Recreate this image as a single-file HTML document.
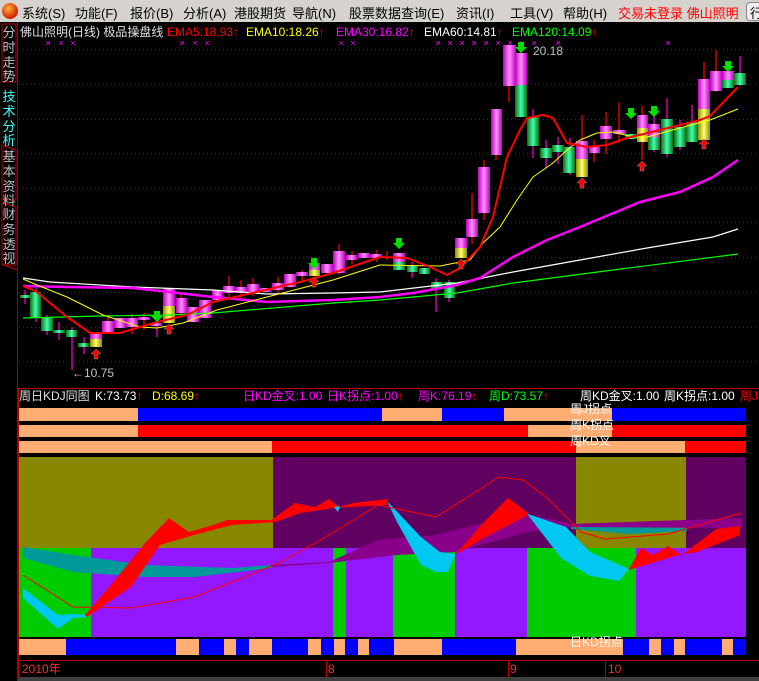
<!DOCTYPE html>
<html><head><meta charset="utf-8"><style>
*{margin:0;padding:0}
body{width:759px;height:681px;overflow:hidden;background:#000;font-family:"Liberation Sans","Noto Sans CJK SC",sans-serif;position:relative}
#menu{position:absolute;left:0;top:0;width:759px;height:22px;background:#d6d3ce;font-size:13px;color:#000}
#menu span{position:absolute;top:3px;white-space:nowrap}
svg{position:absolute;left:0;top:0}
</style></head><body>
<div id="menu">
<div style="position:absolute;left:2px;top:3px;width:16px;height:16px;border-radius:50%;background:radial-gradient(circle at 40% 35%,#ffb040,#d02000 70%);"></div>
<span style="left:22px">系统(S)</span><span style="left:75px">功能(F)</span><span style="left:130px">报价(B)</span><span style="left:183px">分析(A)</span><span style="left:234px">港股期货</span><span style="left:292px">导航(N)</span><span style="left:349px">股票数据查询(E)</span><span style="left:456px">资讯(I)</span><span style="left:510px">工具(V)</span><span style="left:563px">帮助(H)</span>
<span style="left:618px;color:#f00">交易未登录 佛山照明</span>
<div style="position:absolute;left:746px;top:2px;width:20px;height:17px;border:1px solid #888;border-radius:4px;background:#eee;font-size:13px;padding-left:3px">行</div>
</div>
<svg width="759" height="681" viewBox="0 0 759 681" style="top:0" font-family="Liberation Sans, Noto Sans CJK SC, sans-serif">
<defs>
<linearGradient id="m" x1="0" x2="1"><stop offset="0" stop-color="#c000c0"/><stop offset=".5" stop-color="#ff90ff"/><stop offset="1" stop-color="#c000c0"/></linearGradient>
<linearGradient id="g" x1="0" x2="1"><stop offset="0" stop-color="#107010"/><stop offset=".5" stop-color="#40ffb0"/><stop offset="1" stop-color="#107010"/></linearGradient>
<linearGradient id="o" x1="0" x2="1"><stop offset="0" stop-color="#909000"/><stop offset=".5" stop-color="#ffff70"/><stop offset="1" stop-color="#909000"/></linearGradient>
</defs>
<!-- sidebar -->
<rect x="0" y="22" width="17" height="659" fill="#000"/>
<line x1="17.5" y1="22" x2="17.5" y2="681" stroke="#a00000"/>
<g fill="none" stroke="#c00000"><path d="M2 24H16V82H2Z"/><path d="M2 145L16 150V200H2Z"/><path d="M2 203L16 207V265H2Z"/><path d="M2 264L17 270"/></g>
<g font-size="13" fill="#c0c0c0" text-anchor="middle">
<text x="9" y="37">分</text><text x="9" y="52">时</text><text x="9" y="67">走</text><text x="9" y="81">势</text>
<text x="9" y="101" fill="#40ffff">技</text><text x="9" y="116" fill="#40ffff">术</text><text x="9" y="131" fill="#40ffff">分</text><text x="9" y="145" fill="#40ffff">析</text>
<text x="9" y="161">基</text><text x="9" y="176">本</text><text x="9" y="191">资</text><text x="9" y="205">料</text>
<text x="9" y="219">财</text><text x="9" y="234">务</text><text x="9" y="249">透</text><text x="9" y="263">视</text>
</g>
<!-- grid -->
<g stroke="#a00000" stroke-dasharray="1 3">
<line x1="19" y1="49.5" x2="759" y2="49.5"/><line x1="19" y1="84.5" x2="759" y2="84.5"/><line x1="19" y1="119.5" x2="759" y2="119.5"/><line x1="19" y1="153.5" x2="759" y2="153.5"/><line x1="19" y1="188.5" x2="759" y2="188.5"/><line x1="19" y1="222.5" x2="759" y2="222.5"/><line x1="19" y1="257.5" x2="759" y2="257.5"/><line x1="19" y1="292.5" x2="759" y2="292.5"/><line x1="19" y1="327.5" x2="759" y2="327.5"/><line x1="19" y1="361.5" x2="759" y2="361.5"/>
</g>
<!-- title -->
<g font-size="12">
<text x="20" y="36" fill="#e0e0e0">佛山照明(日线) 极品操盘线</text>
<text x="167" y="36" fill="#f00">EMA5:18.93↑</text>
<text x="246" y="36" fill="#ff0">EMA10:18.26<tspan fill="#f00">↑</tspan></text>
<text x="336" y="36" fill="#f0f">EMA30:16.82<tspan fill="#f00">↑</tspan></text>
<text x="424" y="36" fill="#fff">EMA60:14.81<tspan fill="#f00">↑</tspan></text>
<text x="512" y="36" fill="#0f0">EMA120:14.09<tspan fill="#f00">↑</tspan></text>
</g>
<g fill="#f0f" font-size="9" text-anchor="middle">
<text x="48" y="46">×</text><text x="61" y="46">×</text><text x="73" y="46">×</text><text x="182" y="46">×</text><text x="195" y="46">×</text><text x="207" y="46">×</text><text x="341" y="46">×</text><text x="353" y="46">×</text>
<text x="438" y="46">×</text><text x="450" y="46">×</text><text x="462" y="46">×</text><text x="474" y="46">×</text><text x="486" y="46">×</text><text x="498" y="46">×</text><text x="510" y="46">×</text><text x="522" y="46">×</text><text x="534" y="46">×</text><text x="558" y="46">×</text><text x="668" y="46">×</text>
</g>
<text x="533" y="55" fill="#c0c0c0" font-size="12">20.18</text>
<text x="72" y="377" fill="#c0c0c0" font-size="12">←10.75</text>
<!-- wicks -->
<g stroke-width="2">
<line x1="25" y1="290" x2="25" y2="304" stroke="#9b007d"/><line x1="36" y1="288" x2="36" y2="322" stroke="#9b007d"/><line x1="47" y1="315" x2="47" y2="335" stroke="#9b007d"/><line x1="59" y1="322" x2="59" y2="340" stroke="#9b007d"/><line x1="72" y1="327" x2="72" y2="370" stroke="#9b007d"/><line x1="84" y1="337" x2="84" y2="354" stroke="#9b007d"/>
<line x1="108" y1="316" x2="108" y2="334" stroke="#a00000"/><line x1="132" y1="314" x2="132" y2="334" stroke="#a00000"/><line x1="144" y1="313" x2="144" y2="330" stroke="#a00000"/><line x1="157" y1="318" x2="157" y2="337" stroke="#9b007d"/><line x1="181" y1="293" x2="181" y2="316" stroke="#a00000"/><line x1="229" y1="276" x2="229" y2="298" stroke="#a00000"/><line x1="241" y1="280" x2="241" y2="298" stroke="#a00000"/><line x1="253" y1="278" x2="253" y2="296" stroke="#a00000"/><line x1="278" y1="277" x2="278" y2="294" stroke="#a00000"/><line x1="302" y1="270" x2="302" y2="280" stroke="#a00000"/><line x1="339" y1="244" x2="339" y2="275" stroke="#a00000"/><line x1="352" y1="251" x2="352" y2="264" stroke="#a00000"/><line x1="377" y1="250" x2="377" y2="262" stroke="#a00000"/>
<line x1="387" y1="251" x2="387" y2="260" stroke="#a00000"/><line x1="412" y1="262" x2="412" y2="278" stroke="#9b007d"/><line x1="436" y1="278" x2="436" y2="312" stroke="#9b007d"/><line x1="449" y1="280" x2="449" y2="302" stroke="#9b007d"/><line x1="472" y1="193" x2="472" y2="244" stroke="#a00000"/><line x1="484" y1="160" x2="484" y2="220" stroke="#a00000"/><line x1="496" y1="109" x2="496" y2="160" stroke="#a00000"/><line x1="509" y1="45" x2="509" y2="102" stroke="#a00000"/><line x1="533" y1="109" x2="533" y2="158" stroke="#9b007d"/><line x1="546" y1="140" x2="546" y2="168" stroke="#9b007d"/><line x1="558" y1="137" x2="558" y2="164" stroke="#9b007d"/><line x1="570" y1="138" x2="570" y2="175" stroke="#9b007d"/><line x1="582" y1="115" x2="582" y2="177" stroke="#a00000"/><line x1="594" y1="140" x2="594" y2="162" stroke="#a00000"/><line x1="606" y1="112" x2="606" y2="154" stroke="#a00000"/><line x1="619" y1="102" x2="619" y2="143" stroke="#a00000"/><line x1="642" y1="106" x2="642" y2="160" stroke="#a00000"/><line x1="654" y1="110" x2="654" y2="152" stroke="#9b007d"/><line x1="667" y1="98" x2="667" y2="157" stroke="#9b007d"/><line x1="680" y1="120" x2="680" y2="150" stroke="#9b007d"/><line x1="692" y1="105" x2="692" y2="142" stroke="#9b007d"/><line x1="704" y1="62" x2="704" y2="110" stroke="#a00000"/><line x1="716" y1="50" x2="716" y2="92" stroke="#a00000"/><line x1="740" y1="56" x2="740" y2="86" stroke="#9b007d"/>
</g>
<!-- candles -->
<g>
<rect x="20" y="295" width="11" height="3" fill="url(#g)"/>
<rect x="30" y="292" width="11" height="26" fill="url(#g)"/>
<rect x="41" y="318" width="12" height="13" fill="url(#g)"/>
<rect x="53" y="330" width="12" height="3" fill="url(#g)"/>
<rect x="66" y="330" width="11" height="7" fill="url(#g)"/>
<rect x="78" y="343" width="11" height="4" fill="url(#g)"/>
<rect x="90" y="334" width="12" height="5" fill="url(#m)"/><rect x="90" y="339" width="12" height="8" fill="url(#o)"/>
<rect x="102" y="321" width="12" height="11" fill="url(#m)"/>
<rect x="114" y="318" width="12" height="10" fill="url(#m)"/>
<rect x="126" y="318" width="12" height="9" fill="url(#m)"/>
<rect x="138" y="317" width="12" height="3" fill="url(#m)"/>
<rect x="150" y="323" width="12" height="3" fill="url(#m)"/>
<rect x="163" y="288" width="12" height="18" fill="url(#m)"/><rect x="163" y="306" width="12" height="17" fill="url(#o)"/>
<rect x="176" y="298" width="11" height="15" fill="url(#m)"/>
<rect x="187" y="307" width="12" height="15" fill="url(#m)"/>
<rect x="199" y="300" width="12" height="18" fill="url(#m)"/>
<rect x="212" y="290" width="11" height="10" fill="url(#m)"/>
<rect x="223" y="286" width="12" height="7" fill="url(#m)"/>
<rect x="235" y="287" width="12" height="6" fill="url(#m)"/>
<rect x="247" y="284" width="12" height="8" fill="url(#m)"/>
<rect x="259" y="288" width="12" height="4" fill="url(#m)"/>
<rect x="272" y="283" width="12" height="7" fill="url(#m)"/>
<rect x="284" y="274" width="12" height="13" fill="url(#m)"/>
<rect x="296" y="272" width="12" height="4" fill="url(#m)"/>
<rect x="309" y="264" width="11" height="6" fill="url(#m)"/><rect x="309" y="270" width="11" height="6" fill="url(#o)"/>
<rect x="321" y="264" width="12" height="9" fill="url(#m)"/>
<rect x="333" y="251" width="12" height="22" fill="url(#m)"/>
<rect x="346" y="255" width="11" height="5" fill="url(#m)"/>
<rect x="358" y="253" width="12" height="5" fill="url(#m)"/>
<rect x="370" y="254" width="12" height="4" fill="url(#m)"/>
<rect x="393" y="253" width="12" height="9" fill="url(#m)"/><rect x="393" y="262" width="12" height="8" fill="url(#g)"/>
<rect x="407" y="266" width="11" height="6" fill="url(#g)"/>
<rect x="419" y="268" width="11" height="6" fill="url(#g)"/>
<rect x="431" y="282" width="12" height="7" fill="url(#g)"/>
<rect x="444" y="282" width="11" height="16" fill="url(#g)"/>
<rect x="455" y="238" width="12" height="10" fill="url(#m)"/><rect x="455" y="248" width="12" height="10" fill="url(#o)"/>
<rect x="466" y="219" width="12" height="18" fill="url(#m)"/>
<rect x="478" y="167" width="12" height="46" fill="url(#m)"/>
<rect x="491" y="109" width="11" height="46" fill="url(#m)"/>
<rect x="503" y="45" width="13" height="41" fill="url(#m)"/>
<rect x="515" y="53" width="12" height="32" fill="url(#m)"/><rect x="515" y="85" width="12" height="32" fill="url(#g)"/>
<rect x="527" y="117" width="12" height="29" fill="url(#g)"/>
<rect x="540" y="148" width="12" height="10" fill="url(#g)"/>
<rect x="552" y="145" width="12" height="7" fill="url(#g)"/>
<rect x="563" y="147" width="12" height="26" fill="url(#g)"/>
<rect x="576" y="141" width="12" height="18" fill="url(#m)"/><rect x="576" y="159" width="12" height="18" fill="url(#o)"/>
<rect x="589" y="147" width="11" height="6" fill="url(#m)"/>
<rect x="600" y="126" width="12" height="13" fill="url(#m)"/>
<rect x="613" y="130" width="13" height="4" fill="url(#m)"/>
<rect x="625" y="134" width="12" height="5" fill="url(#g)"/>
<rect x="637" y="115" width="11" height="13" fill="url(#m)"/><rect x="637" y="128" width="11" height="14" fill="url(#o)"/>
<rect x="648" y="124" width="12" height="13" fill="url(#m)"/><rect x="648" y="137" width="12" height="13" fill="url(#g)"/>
<rect x="661" y="119" width="12" height="35" fill="url(#g)"/>
<rect x="674" y="127" width="12" height="20" fill="url(#g)"/>
<rect x="686" y="122" width="12" height="20" fill="url(#g)"/>
<rect x="698" y="79" width="12" height="30" fill="url(#m)"/><rect x="698" y="109" width="12" height="31" fill="url(#o)"/>
<rect x="710" y="71" width="12" height="20" fill="url(#m)"/>
<rect x="722" y="71" width="12" height="9" fill="url(#m)"/><rect x="722" y="80" width="12" height="8" fill="url(#g)"/>
<rect x="734" y="73" width="12" height="12" fill="url(#g)"/>
</g>
<!-- MA lines -->
<g fill="none" stroke-linejoin="round">
<polyline stroke="#0f0" stroke-width="1.2" points="23,318 100,316 167,315 213,313 333,303 380,300 457,293 513,283 613,270 738,254"/>
<polyline stroke="#fff" stroke-width="1.2" points="23,278 50,282 133,287 213,290 267,294 333,293 380,292 457,283 513,272 580,260 647,248 713,237 738,229"/>
<polyline stroke="#f0f" stroke-width="2.5" points="23,286 67,287 133,288 160,291 213,297 267,302 333,300 380,297 413,293 457,285 480,278 513,257 547,240 580,227 640,202 680,192 713,177 738,160"/>
<polyline stroke="#ff0" stroke-width="1" points="23,279 37,285 67,297 103,315 140,327 157,328 183,323 217,310 267,297 333,280 380,265 440,266 470,260 483,243 500,227 517,200 533,177 553,163 567,150 580,140 597,133 613,132 633,137 647,137 680,128 710,120 738,109"/>
<polyline stroke="#f00" stroke-width="2" points="23,286 37,292 50,303 67,317 83,328 90,333 120,333 140,327 157,322 187,315 213,302 300,282 333,273 380,257 407,258 430,267 447,275 460,268 480,247 493,217 507,157 520,130 527,118 543,115 553,118 567,143 587,147 607,145 627,138 660,130 700,120 710,116 738,87"/>
</g>
<!-- arrows -->
<g fill="#00e000"><path d="M154 311h6v5h3l-6 6-6-6h3z"/><path d="M311 258h6v5h3l-6 6-6-6h3z"/><path d="M396 238h6v5h3l-6 6-6-6h3z"/><path d="M518 42h6v5h3l-6 6-6-6h3z"/><path d="M628 108h6v5h3l-6 6-6-6h3z"/><path d="M651 106h6v5h3l-6 6-6-6h3z"/><path d="M725 61h6v5h3l-6 6-6-6h3z"/></g>
<g fill="#f00" stroke="#888" stroke-width=".5"><path d="M96 349l-5 5h3v5h4v-5h3z"/><path d="M169 324l-5 5h3v5h4v-5h3z"/><path d="M314 277l-5 5h3v5h4v-5h3z"/><path d="M461 259l-5 5h3v5h4v-5h3z"/><path d="M582 178l-5 5h3v5h4v-5h3z"/><path d="M642 161l-5 5h3v5h4v-5h3z"/><path d="M704 139l-5 5h3v5h4v-5h3z"/></g>
<!-- separator -->
<line x1="18" y1="388.5" x2="759" y2="388.5" stroke="#c00000"/>
<g font-size="12">
<text x="19" y="400" fill="#e0e0e0">周日KDJ同图</text>
<text x="95" y="400" fill="#fff">K:73.73<tspan fill="#f00">↑</tspan></text>
<text x="152" y="400" fill="#ff0">D:68.69<tspan fill="#f00">↑</tspan></text>
<text x="243" y="400" fill="#f0f">日KD金叉:1.00</text>
<text x="327" y="400" fill="#f0f">日K拐点:1.00<tspan fill="#f00">↑</tspan></text>
<text x="418" y="400" fill="#f0f">周K:76.19<tspan fill="#f00">↑</tspan></text>
<text x="489" y="400" fill="#0f0">周D:73.57<tspan fill="#f00">↑</tspan></text>
<text x="580" y="400" fill="#fff">周KD金叉:1.00</text>
<text x="664" y="400" fill="#fff">周K拐点:1.00</text>
<text x="740" y="400" fill="#f00">周J</text>
</g>
<!-- bars -->
<g>
<rect x="18" y="408" width="120" height="13" fill="#ffad72"/><rect x="138" y="408" width="244" height="13" fill="#0000ff"/><rect x="382" y="408" width="60" height="13" fill="#ffad72"/><rect x="442" y="408" width="62" height="13" fill="#0000ff"/><rect x="504" y="408" width="108" height="13" fill="#ffad72"/><rect x="612" y="408" width="134" height="13" fill="#0000ff"/>
<rect x="18" y="425" width="120" height="12" fill="#ffad72"/><rect x="138" y="425" width="390" height="12" fill="#f00"/><rect x="528" y="425" width="84" height="12" fill="#ffad72"/><rect x="612" y="425" width="134" height="12" fill="#f00"/>
<rect x="18" y="441" width="254" height="12" fill="#ffad72"/><rect x="272" y="441" width="304" height="12" fill="#f00"/><rect x="576" y="441" width="109" height="12" fill="#ffad72"/><rect x="685" y="441" width="61" height="12" fill="#f00"/>
</g>
<g font-size="12" fill="#fff"><text x="570" y="413">周J拐点</text><text x="570" y="429">周K拐点</text><text x="570" y="445">周KD叉</text></g>
<!-- lower panel bg -->
<rect x="18" y="457" width="255" height="91" fill="#888800"/><rect x="273" y="457" width="303" height="91" fill="#600060"/><rect x="576" y="457" width="110" height="91" fill="#888800"/><rect x="686" y="457" width="60" height="91" fill="#600060"/>
<rect x="18" y="548" width="73" height="89" fill="#00cc00"/><rect x="91" y="548" width="242" height="89" fill="#9318ff"/><rect x="333" y="548" width="13" height="89" fill="#00cc00"/><rect x="346" y="548" width="47" height="89" fill="#9318ff"/><rect x="393" y="548" width="62" height="89" fill="#00cc00"/><rect x="455" y="548" width="72" height="89" fill="#9318ff"/><rect x="527" y="548" width="109" height="89" fill="#00cc00"/><rect x="636" y="548" width="110" height="89" fill="#9318ff"/>
<!-- bands -->
<polygon fill="#009999" points="23,547 73,555 145,565 232,568 271,565 271,568 194,577 145,577 73,572 23,558"/>
<polygon fill="#009999" points="571,524 629,527 687,528 687,531 629,534 571,529"/>
<polygon fill="#8b008b" points="271,565 329,562 378,540 436,535 523,513 571,524 741,518 741,528 571,527 528,532 455,552 397,555 329,563 271,567"/>
<polygon fill="#00c8f0" points="23,588 58,615 73,614 87,615 87,617 73,618 58,629 23,598"/>
<polygon fill="#f00" points="85,615 111,585 145,543 169,518 189,532 213,525 227,520 271,520 295,503 315,507 329,499 339,507 353,503 387,499 387,505 334,508 300,513 276,522 232,525 194,535 160,545 131,587 87,617"/>
<polygon fill="#00c8f0" points="334,507 340,506 338,512"/>
<polygon fill="#00c8f0" points="387,501 421,537 440,552 455,554 455,555 448,572 436,572 421,565 397,522"/>
<polygon fill="#f00" points="455,555 484,522 508,498 528,513 528,515 484,538"/>
<polygon fill="#00c8f0" points="528,514 566,527 590,552 629,569 619,581 590,576 561,558 528,515"/>
<polygon fill="#f00" points="629,569 641,548 653,555 668,546 682,555 716,529 740,526 740,535 697,552 678,555 629,570"/>
<polyline fill="none" stroke="#f00" stroke-width="1" points="23,575 73,607 131,608 194,597 242,578 281,562 324,538 378,505 436,517 499,477 523,480 547,498 581,532 605,539 668,534 741,513"/>
<!-- bottom strip -->
<rect x="18" y="639" width="728" height="16" fill="#0000ff"/>
<g fill="#ffad72"><rect x="18" y="639" width="48" height="16"/><rect x="176" y="639" width="23" height="16"/><rect x="224" y="639" width="12" height="16"/><rect x="249" y="639" width="23" height="16"/><rect x="308" y="639" width="13" height="16"/><rect x="334" y="639" width="11" height="16"/><rect x="358" y="639" width="11" height="16"/><rect x="394" y="639" width="48" height="16"/><rect x="516" y="639" width="107" height="16"/><rect x="649" y="639" width="12" height="16"/><rect x="674" y="639" width="11" height="16"/><rect x="722" y="639" width="11" height="16"/></g>
<text x="570" y="646" font-size="12" fill="#fff">日KD拐点</text>
<!-- axis -->
<line x1="18" y1="660.5" x2="759" y2="660.5" stroke="#c00000"/>
<line x1="18.5" y1="389" x2="18.5" y2="681" stroke="#c00000"/>
<g stroke="#c00000"><line x1="326.5" y1="660" x2="326.5" y2="677"/><line x1="508.5" y1="660" x2="508.5" y2="677"/><line x1="605.5" y1="660" x2="605.5" y2="677"/></g>
<g font-size="12" fill="#f03030"><text x="22" y="673">2010年</text><text x="328" y="673">8</text><text x="510" y="673">9</text><text x="608" y="673">10</text></g>
<rect x="18" y="677" width="741" height="4" fill="#404040"/>
</svg>
</body></html>
